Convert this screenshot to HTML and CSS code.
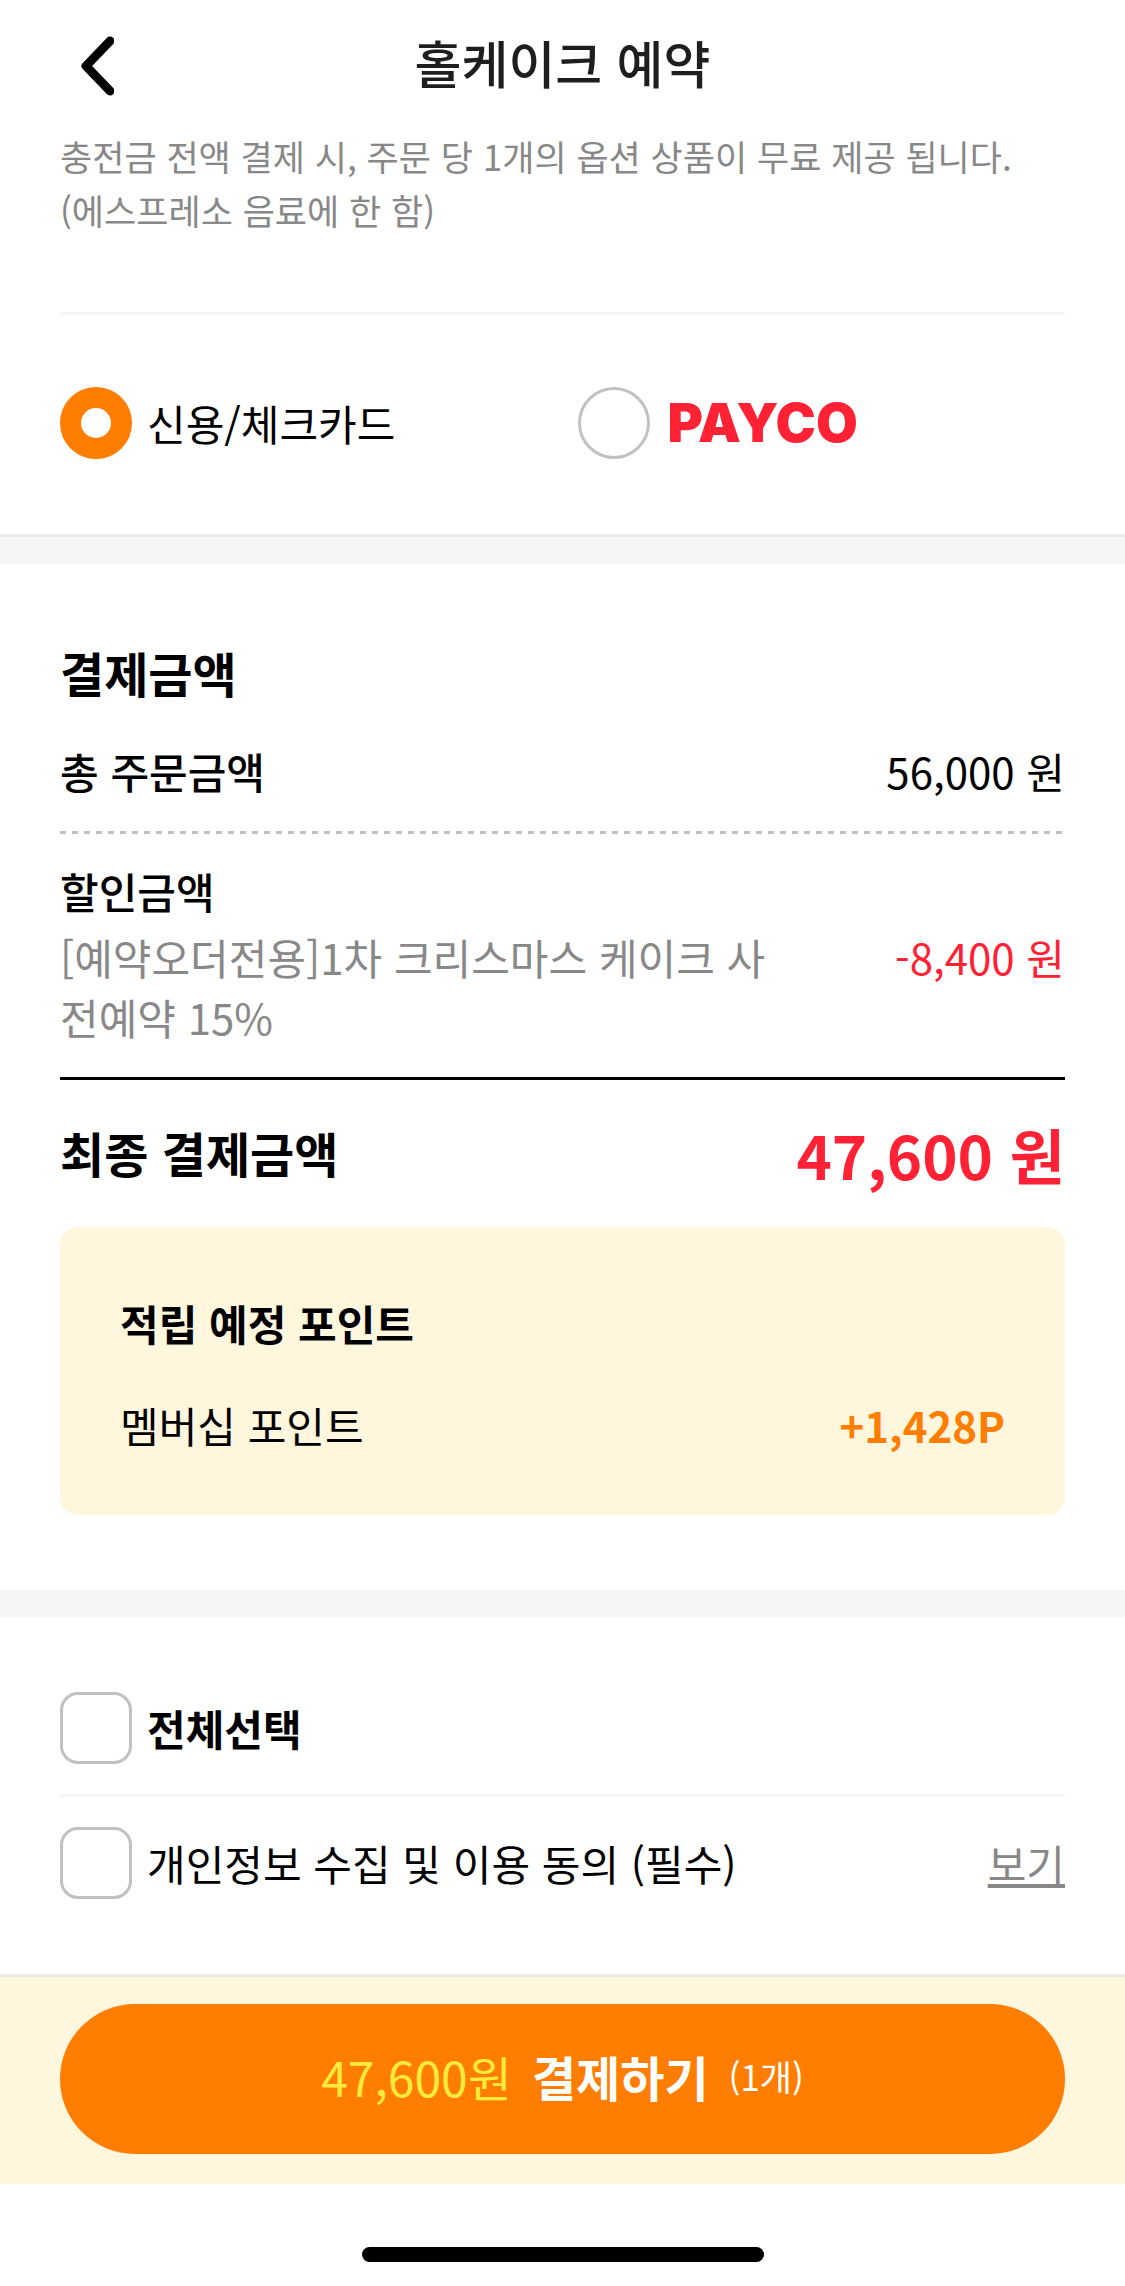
FILE: index.html
```html
<!DOCTYPE html>
<html lang="ko">
<head>
<meta charset="utf-8">
<meta name="viewport" content="width=device-width, initial-scale=1">
<title>홀케이크 예약</title>
<link rel="stylesheet" href="styles.css">
</head>
<body>
<div class="screen">
  <header class="topbar">
    <button class="back" type="button" aria-label="뒤로">
      <svg class="back-icon" viewBox="0 0 36 60" fill="none" stroke="#000" stroke-width="9" stroke-linecap="round" stroke-linejoin="round"><path d="M32 5 L8 30 L32 55"/></svg>
    </button>
    <h1 class="title">홀케이크 예약</h1>
  </header>

  <main>
    <section class="pay-method">
      <p class="note">충전금 전액 결제 시, 주문 당 1개의 옵션 상품이 무료 제공 됩니다.<br>(에스프레소 음료에 한 함)</p>
      <div class="options" role="radiogroup" aria-label="결제수단">
        <label class="choice"><input class="radio" type="radio" name="method" checked><span>신용/체크카드</span></label>
        <label class="choice"><input class="radio" type="radio" name="method"><span class="payco">PAYCO</span></label>
      </div>
    </section>

    <section class="amounts">
      <h2 class="heading">결제금액</h2>
      <div class="row total"><h3 class="label">총 주문금액</h3><span>56,000 원</span></div>
      <div class="discount">
        <h3 class="label">할인금액</h3>
        <div class="row discount-row"><p class="coupon">[예약오더전용]1차 크리스마스 케이크 사전예약 15%</p><span class="minus">-8,400 원</span></div>
      </div>
      <div class="row final"><h2 class="heading">최종 결제금액</h2><strong class="final-price">47,600 원</strong></div>
      <div class="points">
        <h3 class="points-title">적립 예정 포인트</h3>
        <div class="row"><span>멤버십 포인트</span><strong class="points-value">+1,428P</strong></div>
      </div>
    </section>

    <section class="terms">
      <div class="term"><label class="choice all"><input class="check" type="checkbox"><span>전체선택</span></label></div>
      <div class="term"><label class="choice"><input class="check" type="checkbox"><span>개인정보 수집 및 이용 동의 (필수)</span></label><a class="view" href="#">보기</a></div>
    </section>
  </main>

  <footer class="paybar">
    <button class="pay" type="button"><span class="pay-price">47,600원</span><span class="pay-label">결제하기</span><span class="pay-count">(1개)</span></button>
  </footer>
  <div class="home"></div>
</div>
</body>
</html>
```
FILE: styles.css
```css
* { box-sizing: border-box; margin: 0; padding: 0; }

body {
  background: #fff;
  color: #000;
  font-family: "Noto Sans CJK KR", "Noto Sans", sans-serif;
  font-size: 42px;
  line-height: 60px;
}

button, input { font: inherit; border: 0; background: none; }

.screen {
  min-height: 100vh;
  display: flex;
  flex-direction: column;
}

.topbar {
  display: grid;
  grid-template-columns: 1fr auto 1fr;
  align-items: center;
  height: 129px;
  padding: 0 60px 6px;
}

.back {
  justify-self: start;
  display: flex;
  padding: 9px 18px 0;
}

.back-icon { width: 36px; height: 60px; }

.title {
  color: #1e1e1e;
  font-size: 51px;
  font-weight: 500;
}

.pay-method {
  padding: 0 60px 75px;
  border-bottom: 3px solid #eaeaea;
}

.note {
  padding-bottom: 75px;
  border-bottom: 3px solid #f5f5f5;
  color: #888;
  font-size: 35px;
  line-height: 54px;
}

.options {
  display: grid;
  grid-template-columns: 1fr 1fr;
  column-gap: 30px;
  padding-top: 72px;
}

.choice {
  display: flex;
  align-items: center;
  gap: 15px;
}

.radio, .check {
  appearance: none;
  flex: none;
  width: 72px;
  height: 72px;
  border: 3px solid #c1c1c1;
  background: #fff;
}

.radio { border-radius: 50%; }
.radio:checked { border: 21px solid #ff7d00; }
.check { border-radius: 18px; }
.check:checked { background: #ff7d00; }

.payco {
  padding-left: 3px;
  color: #ff2134;
  font-family: Inter, sans-serif;
  font-size: 54px;
  font-weight: 900;
}

.amounts {
  padding: 72px 60px 75px;
  border-top: 27px solid #f5f5f5;
  border-bottom: 27px solid #f5f5f5;
}

.heading {
  font-size: 48px;
  font-weight: 700;
  line-height: 72px;
}

.row {
  display: flex;
  justify-content: space-between;
  align-items: flex-start;
}

.label { font-size: 42px; font-weight: 500; }

.total { padding: 33px 0 30px; }

.discount {
  padding: 30px 0;
  border-bottom: 3px solid #000;
  background: repeating-linear-gradient(90deg, #c1c1c1 0 6px, transparent 6px 12px) top / 100% 3px no-repeat;
}

.discount-row { padding-top: 6px; }
.coupon { flex: 0 1 720px; color: #888; word-break: break-all; }
.minus { color: #ff2134; }

.final { padding: 36px 0; }

.final-price {
  color: #ff2134;
  font-size: 60px;
  line-height: 75px;
}

.points {
  padding: 66px 60px 60px;
  border-radius: 18px;
  background: #fff6de;
}

.points-title { margin-bottom: 42px; font-size: 42px; }
.points-value { color: #ff7d00; }

.terms { padding: 45px 60px; }

.term {
  display: flex;
  justify-content: space-between;
  align-items: center;
  padding: 30px 0;
}

.term + .term { border-top: 3px solid #f5f5f5; }
.all { font-weight: 700; }
.view { color: #888; text-decoration: underline; }

.paybar {
  padding: 27px 60px 30px;
  border-top: 3px solid #e9e9e9;
  background: #fff6de;
}

.pay {
  display: flex;
  justify-content: center;
  align-items: center;
  gap: 20px;
  width: 100%;
  height: 150px;
  padding-bottom: 6px;
  border-radius: 75px;
  background: #ff7d00;
  color: #fff;
}

.pay-price { color: #ffeb3b; font-size: 48px; }
.pay-label { font-size: 48px; font-weight: 700; }
.pay-count { font-size: 35px; }

.home {
  width: 402px;
  height: 15px;
  margin: 63px auto 24px;
  border-radius: 8px;
  background: #000;
}
```
